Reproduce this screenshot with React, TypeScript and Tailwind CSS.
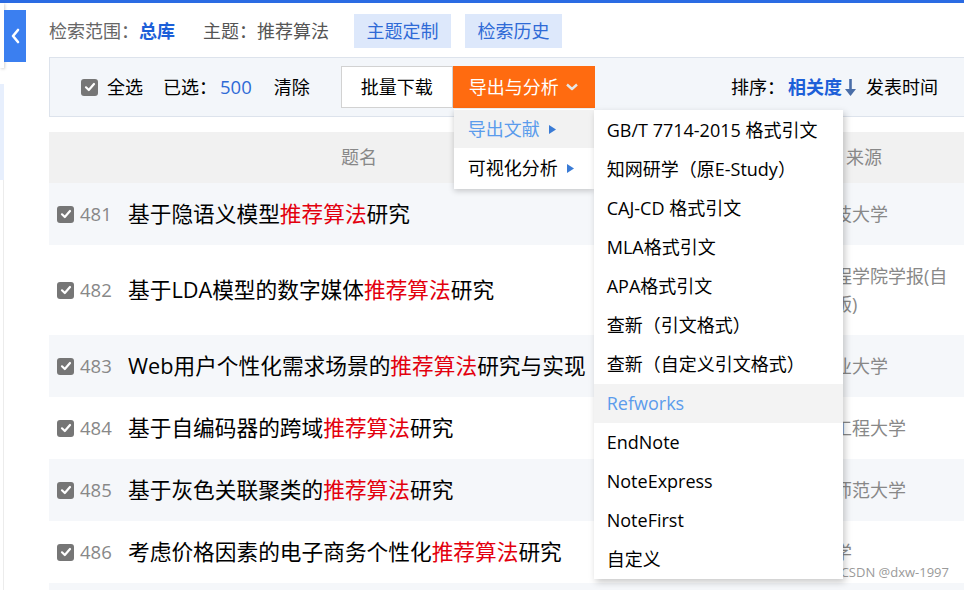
import React from 'react';

const rows = [
  { no: 481, pre: '基于隐语义模型', post: '研究', src: '华中科技大学', bg: 'bg-[#f5f7fa]' },
  { no: 482, pre: '基于LDA模型的数字媒体', post: '研究', src: '湖北工程学院学报(自然科学版)', bg: 'bg-white' },
  { no: 483, pre: 'Web用户个性化需求场景的', post: '研究与实现', src: '合肥工业大学', bg: 'bg-[#f5f7fa]' },
  { no: 484, pre: '基于自编码器的跨域', post: '研究', src: '哈尔滨工程大学', bg: 'bg-white' },
  { no: 485, pre: '基于灰色关联聚类的', post: '研究', src: '哈尔滨师范大学', bg: 'bg-[#f5f7fa]' },
  { no: 486, pre: '考虑价格因素的电子商务个性化', post: '研究', src: '山东大学', bg: 'bg-white' },
];

const cites = [
  'GB/T 7714-2015 格式引文',
  '知网研学（原E-Study）',
  'CAJ-CD 格式引文',
  'MLA格式引文',
  'APA格式引文',
  '查新（引文格式）',
  '查新（自定义引文格式）',
  'Refworks',
  'EndNote',
  'NoteExpress',
  'NoteFirst',
  '自定义',
];

function Check() {
  return (
    <span className="flex h-[17px] w-[17px] shrink-0 items-center justify-center rounded-[3px] bg-[#767676]">
      <svg width="12" height="12" viewBox="0 0 12 12">
        <path d="M2 6.3 L4.8 9 L10 3" fill="none" stroke="white" strokeWidth="2.2" strokeLinecap="round" strokeLinejoin="round" />
      </svg>
    </span>
  );
}

function Tri() {
  return (
    <svg width="7" height="9" viewBox="0 0 7 9" className="ml-[9px]">
      <path d="M0 0 L7 4.5 L0 9 Z" fill="#3a7bd5" />
    </svg>
  );
}

export default function App() {
  return (
    <div className="relative h-[590px] w-[964px] overflow-hidden bg-white text-[18px] text-black [font-family:'Open_Sans','Noto_Sans_CJK_SC',sans-serif]">
      <div className="h-[3px] bg-[#2a6be3]" />
      <div className="flex">
        {/* left rail */}
        <div className="relative w-[4px] shrink-0">
          <div className="h-[65px] bg-white shadow-[1px_1px_3px_rgba(0,0,0,0.18)]" />
          <div className="mt-[16px] h-[96px] bg-[#e7effd]" />
          <div className="h-[500px] border-r border-[#ececec]" />
          <button className="absolute left-[4px] top-[7px] flex h-[52px] w-[22px] items-center justify-center bg-[#3b7ff0]">
            <svg width="10" height="16" viewBox="0 0 10 16">
              <path d="M8 2 L3 8 L8 14" fill="none" stroke="white" strokeWidth="2.6" strokeLinecap="round" strokeLinejoin="round" />
            </svg>
          </button>
        </div>

        <div className="flex-1 pl-[45px]">
          {/* search summary */}
          <div className="mt-[11px] flex h-[34px] items-center">
            <span className="text-[#666]">检索范围：</span>
            <span className="font-bold text-[#1c5fd8]">总库</span>
            <span className="ml-[28px] text-[#555]">主题：推荐算法</span>
            <span className="ml-[25px] flex h-[34px] w-[97px] items-center justify-center bg-[#dde8fb] text-[#2f6ad6]">主题定制</span>
            <span className="ml-[14px] flex h-[34px] w-[97px] items-center justify-center bg-[#dde8fb] text-[#2f6ad6]">检索历史</span>
          </div>

          {/* toolbar */}
          <div className="relative z-10 mt-[9px] flex h-[60px] items-center border border-r-0 border-[#dde3ec] bg-[#f3f6fa]">
            <span className="ml-[31px]"><Check /></span>
            <span className="ml-[9px]">全选</span>
            <span className="ml-[20px]">已选：</span>
            <span className="ml-[3px] text-[18.5px] text-[#2f6ad6]">500</span>
            <span className="ml-[22px]">清除</span>
            <span className="ml-[31px] flex h-[42px] w-[112px] items-center justify-center border border-[#d2d2d2] bg-white">批量下载</span>
            <div className="relative">
              <span className="flex h-[42px] w-[142px] items-center bg-[#ff6b10] pl-[16px] text-white">
                导出与分析
                <svg width="14" height="8" viewBox="0 0 14 8" className="ml-[6px]">
                  <path d="M2 1.5 L7 6 L12 1.5" fill="none" stroke="#e6e6e6" strokeWidth="2.4" strokeLinejoin="round" />
                </svg>
              </span>
              {/* first level menu */}
              <div className="absolute left-[1px] top-[43px] w-[140px] bg-white py-[1px] shadow-[0_2px_6px_rgba(0,0,0,0.2)]">
                <div className="flex h-[38px] items-center bg-[#f2f2f2] pl-[14px] text-[#5b9cec]">导出文献<Tri /></div>
                <div className="flex h-[40px] items-center pl-[14px]">可视化分析<Tri /></div>
                {/* second level menu */}
                <div className="absolute left-[140px] top-[1px] w-[249px] bg-white pt-[1px] shadow-[2px_3px_7px_rgba(0,0,0,0.22)]">
                  {cites.map((c) => (
                    <div
                      key={c}
                      className={
                        c === 'Refworks'
                          ? 'flex h-[39px] items-center bg-[#f3f3f3] pl-[13px] text-[#5b9cec]'
                          : 'flex h-[39px] items-center pl-[13px]'
                      }
                    >
                      {c}
                    </div>
                  ))}
                </div>
              </div>
            </div>
            <div className="ml-auto mr-[26px] flex items-center">
              <span>排序：</span>
              <span className="ml-[3px] font-bold text-[#1c5fd8]">相关度</span>
              <svg width="13" height="19" viewBox="0 0 13 19" className="ml-[2px]">
                <path d="M6.5 1 L6.5 13" stroke="#4a6ea8" strokeWidth="2.6" />
                <path d="M1 11 L12 11 L6.5 18 Z" fill="#4a6ea8" />
              </svg>
              <span className="ml-[9px]">发表时间</span>
            </div>
          </div>

          {/* results table */}
          <div className="mt-[15px]">
            <div className="flex h-[51px] items-center bg-[#f1f1f1] text-[#888]">
              <span className="w-[731px] pl-[292px]">题名</span>
              <span className="pl-[66px]">来源</span>
            </div>
            {rows.map((r) => (
              <div key={r.no} className={`flex items-center py-[17px] ${r.bg}`}>
                <div className="flex w-[731px] items-center pl-[8px]">
                  <Check />
                  <span className="ml-[6px] w-[48px] text-[18.5px] text-[#888]">{r.no}</span>
                  <span className="text-[21.7px] leading-[28px]">
                    {r.pre}
                    <span className="text-[#e3000e]">推荐算法</span>
                    {r.post}
                  </span>
                </div>
                <div className="w-[172px] leading-[28px] text-[#888]">{r.src}</div>
              </div>
            ))}
            <div className="h-[20px] bg-[#f5f7fa]" />
          </div>
        </div>
      </div>
      <div className="absolute bottom-[8px] right-[15px] text-[13px] text-[#9a9a9a]">CSDN @dxw-1997</div>
    </div>
  );
}
